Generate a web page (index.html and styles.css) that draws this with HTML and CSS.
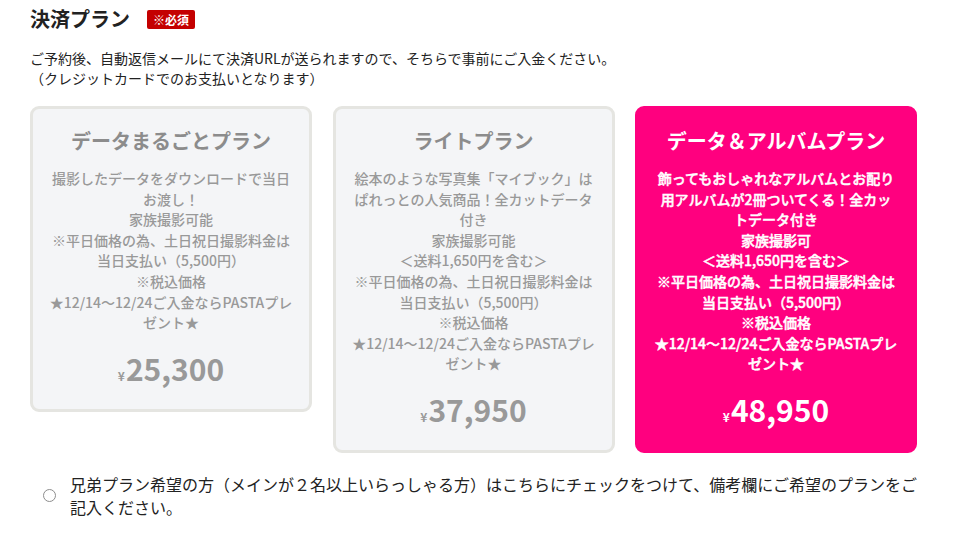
FILE: index.html
```html
<!DOCTYPE html>
<html lang="ja">
<head>
<meta charset="utf-8">
<link rel="stylesheet" href="styles.css">
</head>
<body>
<section class="plan-section">
  <div class="heading">
    <h2 class="heading-title">決済プラン</h2>
    <span class="badge">※必須</span>
  </div>
  <p class="lead">ご予約後、自動返信メールにて決済URLが送られますので、そちらで事前にご入金ください。<br>（クレジットカードでのお支払いとなります）</p>

  <div class="plans">
    <div class="plan">
      <h3 class="plan-name">データまるごとプラン</h3>
      <p class="plan-desc">撮影したデータをダウンロードで当日お渡し！<br>家族撮影可能<br>※平日価格の為、土日祝日撮影料金は当日支払い（5,500円）<br>※税込価格<br>★12/14～12/24ご入金ならPASTAプレゼント★</p>
      <p class="plan-price"><span class="yen">¥</span>25,300</p>
    </div>
    <div class="plan">
      <h3 class="plan-name">ライトプラン</h3>
      <p class="plan-desc">絵本のような写真集「マイブック」はぱれっとの人気商品！全カットデータ付き<br>家族撮影可能<br>＜送料1,650円を含む＞<br>※平日価格の為、土日祝日撮影料金は当日支払い（5,500円）<br>※税込価格<br>★12/14～12/24ご入金ならPASTAプレゼント★</p>
      <p class="plan-price"><span class="yen">¥</span>37,950</p>
    </div>
    <div class="plan plan-active">
      <h3 class="plan-name">データ＆アルバムプラン</h3>
      <p class="plan-desc">飾ってもおしゃれなアルバムとお配り用アルバムが2冊ついてくる！全カットデータ付き<br>家族撮影可<br>＜送料1,650円を含む＞<br>※平日価格の為、土日祝日撮影料金は当日支払い（5,500円）<br>※税込価格<br>★12/14～12/24ご入金ならPASTAプレゼント★</p>
      <p class="plan-price"><span class="yen">¥</span>48,950</p>
    </div>
  </div>

  <label class="option">
    <input type="radio" class="option-radio" name="sibling">
    <span class="option-text">兄弟プラン希望の方（メインが２名以上いらっしゃる方）はこちらにチェックをつけて、備考欄にご希望のプランをご記入ください。</span>
  </label>
</section>
</body>
</html>
```
FILE: styles.css
```css
* { box-sizing: border-box; }
html, body { margin: 0; padding: 0; background: #fff; }
body {
  font-family: "Noto Sans CJK JP", "Noto Sans", sans-serif;
  color: #222;
}
.plan-section {
  padding: 4px 30px 0 30px;
  width: 955px;
}
.heading {
  display: flex;
  align-items: center;
  gap: 17px;
  height: 30px;
}
.heading-title {
  margin: 0;
  font-size: 20px;
  font-weight: 700;
  line-height: 30px;
  color: #222;
}
.badge {
  background: #c40000;
  color: #fff;
  font-size: 12px;
  font-weight: 700;
  line-height: 19px;
  padding: 0 6px;
  border-radius: 2px;
}
.lead {
  margin: 14px 0 0 0;
  font-size: 14px;
  line-height: 20px;
  color: #222;
}
.plans {
  display: flex;
  align-items: flex-start;
  gap: 20.5px;
  margin-top: 18px;
}
.plan {
  width: 282px;
  border: 3px solid #e5e5e1;
  border-radius: 9px;
  background: #f4f5f7;
  padding: 15px 16px 12px;
  text-align: center;
  color: #999;
}
.plan-name {
  margin: 0;
  font-size: 20px;
  font-weight: 700;
  line-height: 34px;
  color: #8c8c8c;
}
.plan-desc {
  margin: 10px 0 0 0;
  font-size: 14px;
  line-height: 20.6px;
  font-weight: 500;
  color: #999;
  line-break: strict;
}
.plan-price {
  margin: 14px 0 0 0;
  font-size: 30px;
  font-weight: 700;
  line-height: 42px;
  color: #999;
}
.yen {
  font-size: 12px;
  margin-right: 1px;
}
.plan-active {
  background: #ff007f;
  border-color: #ff007f;
  color: #fff;
}
.plan-active .plan-name,
.plan-active .plan-desc,
.plan-active .plan-price {
  color: #fff;
}
.plan-active .plan-desc {
  -webkit-text-stroke: 0.45px #fff;
}
.option {
  display: flex;
  align-items: center;
  margin-top: 20px;
  padding-left: 13px;
  gap: 14px;
  cursor: pointer;
}
.option-radio {
  appearance: none;
  -webkit-appearance: none;
  margin: 0;
  flex: 0 0 13px;
  width: 13px;
  height: 13px;
  border: 1px solid #8d8d8d;
  border-radius: 50%;
  background: #fff;
}
.option-text {
  font-size: 16px;
  line-height: 23px;
  color: #222;
}
```
